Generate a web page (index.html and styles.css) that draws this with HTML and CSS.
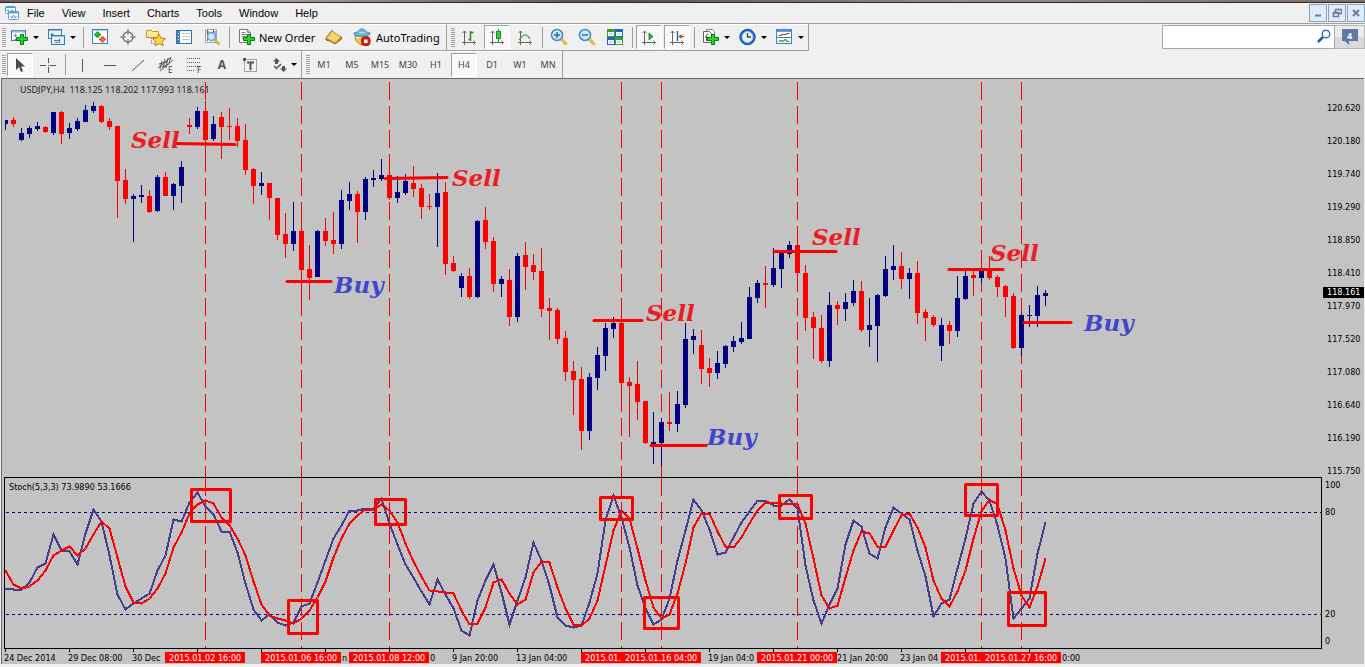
FILE: index.html
```
<!DOCTYPE html>
<html lang="en">
<head>
<meta charset="utf-8">
<title>USDJPY,H4</title>
<link rel="stylesheet" href="styles.css">
</head>
<body>
<div class="titlestrip"></div>
<header class="menubar">
  <svg class="app-icon" width="16" height="16" viewBox="0 0 16 16"><g fill="#fff" stroke="#5b9bd9"><rect x="1.5" y="1.5" width="10" height="7" rx="1"/><path d="M1 2.5h11M3 5.500h2M4 4.500v2M7 5.500h2" fill="none"/><rect x="4.500" y="6.500" width="10" height="8" rx="1"/><path d="M4 7.500h11" stroke-width="2"/><path d="M6.500 11l1.500 2 1.500-3 1.500 3 1.500-2" fill="none"/></g></svg>
  <nav class="menu">
    <button>File</button><button>View</button><button>Insert</button><button>Charts</button><button>Tools</button><button>Window</button><button>Help</button>
  </nav>
  <div class="winbuttons">
    <button aria-label="Minimize"><svg width="10" height="10" viewBox="0 0 10 10"><path d="M2 7.500h6" stroke="#6d7c92" stroke-width="2"/></svg></button>
    <button aria-label="Restore"><svg width="10" height="10" viewBox="0 0 10 10"><path d="M3.500 4V1.500h6v4H7M3 1.500h7M1.500 4.500h5v4h-5zM1 5h6" fill="none" stroke="#6d7c92" stroke-width="1.500"/></svg></button>
    <button aria-label="Close"><svg width="10" height="10" viewBox="0 0 10 10"><path d="M2 2l6 6M8 2L2 8" stroke="#6d7c92" stroke-width="2"/></svg></button>
  </div>
</header>

<div class="row">
  <div class="bar main-tools">
    <span class="grip"></span>
    <button class="drop" aria-label="New chart"><svg width="18" height="18" viewBox="0 0 18 18"><rect x=".5" y="2.500" width="14" height="10" fill="#fff" stroke="#3c78b4"/><path d="M1 3.500h13" stroke="#8db9e4" stroke-width="2"/><path d="M2.500 7.500h4M4.500 5.500v4M3 11.500h5" stroke="#7895b4"/><path d="M9.500 6.500h3v3h4v3h-4v4h-3v-4h-4v-3h4z" fill="#25d825" stroke="#087a12"/></svg><i></i></button>
    <button class="drop" aria-label="Profiles"><svg width="18" height="18" viewBox="0 0 18 18"><g fill="#e8f2fc" stroke="#3c78b4"><rect x=".5" y="1.500" width="13" height="9"/><path d="M1 2.500h12" stroke="#8db9e4"/><path d="M2.500 6.500h3M4 5v3" /><rect x="3.500" y="7.500" width="13" height="9"/><path d="M4 8.500h12" stroke="#8db9e4"/><path d="M6 12.500h6M11.500 11v4M7 14.500h3"/></g></svg><i></i></button>
    <span class="sep"></span>
    <button class="tool" aria-label="Market Watch"><svg width="16" height="16" viewBox="0 0 16 16"><rect x=".5" y=".5" width="15" height="14" fill="#fff" stroke="#3c82c8"/><path d="M1 1.500h14" stroke="#a9cdf0"/><path d="M5.500 2.500L9 6H7v2H4V6H2z" fill="#28c228" stroke="#097c12" stroke-width=".8"/><path d="M10.500 13.500L14 10h-2V8H9v2H7z" fill="#ff6a35" stroke="#c4310a" stroke-width=".8"/></svg></button>
    <button class="tool" aria-label="Data Window"><svg width="16" height="16" viewBox="0 0 16 16"><circle cx="8" cy="8" r="5" fill="none" stroke="#777" stroke-width="1.500"/><path d="M8 0v6M8 10v6M0 8h6M10 8h6" stroke="#666"/></svg></button>
    <button class="tool" aria-label="Favorites"><svg width="20" height="18" viewBox="0 0 20 18"><path d="M.5 2.500h5l1 1h6v6h-12z" fill="#ffe58a" stroke="#c29a26"/><path d="M1 5h11" stroke="#fff4bd"/><path d="M5.500 10v6M5.500 15.500h4" stroke="#777" stroke-dasharray="1 1"/><path d="M13 6l2 4 4.500.6-3.200 3 .8 4.200-4.100-2.100-4.100 2.100.8-4.200-3.200-3L11 10z" fill="#ffd34c" stroke="#ba861a"/></svg></button>
    <button class="tool" aria-label="Navigator"><svg width="16" height="16" viewBox="0 0 16 16"><rect x=".5" y="1.500" width="15" height="13" fill="#fff" stroke="#2c72ba"/><path d="M2.500 2v12" stroke="#3e7fc2" stroke-width="3"/><path d="M2 4.500h1M2 7.500h1M2 10.500h1" stroke="#fff"/><path d="M6 4.500h8M6 7.500h8M6 10.500h8" stroke="#b8c9e8"/></svg></button>
    <button class="tool" aria-label="Strategy Tester"><svg width="18" height="18" viewBox="0 0 18 18"><path d="M2.500 1.500h11v13h-11z" fill="#f9fafc" stroke="#9aa4b0"/><path d="M4.500 2v11M6.500 4h-3M10.500 2v7M12 3v4" stroke="#666"/><path d="M11.500 11.500l5 5" stroke="#e3b139" stroke-width="2.500"/><circle cx="8.500" cy="8.500" r="4" fill="#c5e6fb" fill-opacity=".85" stroke="#5b9bd1" stroke-width="1.400"/></svg></button>
    <span class="sep"></span>
    <button class="wide new-order"><svg width="17" height="18" viewBox="0 0 17 18"><path d="M1.500 1.500h8l3 3v10h-11z" fill="#fff" stroke="#777"/><path d="M9.500 1.500v3h3M3.500 4.500h4M3.500 6.500h7M3.500 8.500h7M3.500 10.500h4" fill="none" stroke="#888"/><path d="M9.500 6.500h3v3h4v3h-4v4h-3v-4h-4v-3h4z" fill="#25d825" stroke="#087a12"/></svg>New Order</button>
    <button class="tool" aria-label="MetaEditor"><svg width="18" height="16" viewBox="0 0 18 16"><path d="M1 9l6-7.500c3 3 6 5 9.500 6.500v2L10 15C7 13 4 11.500 1 11z" fill="#c98a1c" stroke="#8f5c0c"/><path d="M1.500 9L7.500 2c3 3 5.500 4.500 8.500 6l-6 5.500C7 12 4.500 10.500 1.500 9z" fill="#f7cf5c"/><path d="M5 8l4 2.500M7 5.500l5 3" stroke="#fbe6a4"/></svg></button>
    <button class="wide auto-trading"><svg width="18" height="18" viewBox="0 0 18 18"><path d="M2 8h13l-2 6-5 3-5-4z" fill="#f6cb51" stroke="#b88a1d"/><path d="M3 9.500h11" stroke="#fff0b2"/><path d="M1 6.500C0 4 4 4.500 5 4c1-4 7-4 8 0 1 .5 5 0 4 2-2 3-14 3-16 .5z" fill="#6fb7e4" stroke="#3e86b8"/><path d="M6 4c2 1 4 1 6 0" fill="none" stroke="#d2edfc"/><rect x="8.500" y="9" width="8.500" height="8.500" rx="3" fill="#e21c10" stroke="#a80d06"/><rect x="11" y="11.500" width="3.500" height="3.500" fill="#fff"/></svg>AutoTrading</button>
  </div>
  <div class="bar">
    <span class="grip"></span>
    <button class="tool" aria-label="Bar Chart"><svg width="16" height="16" viewBox="0 0 16 16"><path class="axes" d="M3.500 2v14M1.500 4l2-2 2 2M1 13.500h13M12.500 11.500l2 2-2 2"/><path d="M9.500 2v10M7.500 10.500h2M9.500 3.500h3" fill="none" stroke="#14911c" stroke-width="1.500"/></svg></button>
    <button class="tool pressed" aria-label="Candlesticks"><svg width="16" height="16" viewBox="0 0 16 16"><path class="axes" d="M3.500 2v14M1.500 4l2-2 2 2M1 13.500h13M12.500 11.500l2 2-2 2"/><path d="M9.500 0v13" stroke="#14911c"/><rect x="7.500" y="2.500" width="4" height="7" fill="#2bd13a" stroke="#14911c"/></svg></button>
    <button class="tool" aria-label="Line Chart"><svg width="16" height="16" viewBox="0 0 16 16"><path class="axes" d="M3.500 2v14M1.500 4l2-2 2 2M1 13.500h13M12.500 11.500l2 2-2 2"/><path d="M2 11c3-3 4-6 7-5 2 1 3 2 4 4" fill="none" stroke="#3fa548" stroke-width="1.300"/></svg></button>
    <span class="sep"></span>
    <button class="tool" aria-label="Zoom In"><svg width="18" height="18" viewBox="0 0 18 18"><path d="M11 11l5.500 5.500" stroke="#d9a62a" stroke-width="3"/><path d="M11 11l5 5" stroke="#fbe08c"/><circle cx="7" cy="7" r="5.500" fill="#cdeafb" stroke="#3f8ccb" stroke-width="1.500"/><path d="M4 7h6M7 4v6" stroke="#2a6ca8" stroke-width="1.500"/></svg></button>
    <button class="tool" aria-label="Zoom Out"><svg width="18" height="18" viewBox="0 0 18 18"><path d="M11 11l5.500 5.500" stroke="#d9a62a" stroke-width="3"/><path d="M11 11l5 5" stroke="#fbe08c"/><circle cx="7" cy="7" r="5.500" fill="#cdeafb" stroke="#3f8ccb" stroke-width="1.500"/><path d="M4 7h6" stroke="#2a6ca8" stroke-width="1.500"/></svg></button>
    <button class="tool" aria-label="Tile Windows"><svg width="16" height="16" viewBox="0 0 16 16"><path d="M0 0h8v8H0zM8 8h8v8H8z" fill="#38a51c"/><path d="M8 0h8v8H8zM0 8h8v8H0z" fill="#2462d2"/><path d="M1 3h6v4H1zM9 3h6v4H9zM1 11h6v4H1zM9 11h6v4H9z" fill="#f5faff"/><path d="M2 5h4M10 5h4M2 13h4M10 13h4" stroke="#9dc0e8"/></svg></button>
    <span class="sep"></span>
    <button class="tool pressed" aria-label="Auto Scroll"><svg width="16" height="16" viewBox="0 0 16 16"><path class="axes" d="M3.500 2v14M1.500 4l2-2 2 2M1 13.500h13M12.500 11.500l2 2-2 2"/><path d="M8 4l4 3.500L8 11z" fill="#24b52e" stroke="#14811a" stroke-width=".8"/></svg></button>
    <button class="tool pressed" aria-label="Chart Shift"><svg width="16" height="16" viewBox="0 0 16 16"><path class="axes" d="M3.500 2v14M1.500 4l2-2 2 2M1 13.500h13M12.500 11.500l2 2-2 2"/><path d="M8.500 2v10" stroke="#1c6ca8" stroke-width="1.500"/><path d="M10 7.500h5" stroke="#b6401a"/><path d="M9.500 7.500l3-2.500v5z" fill="#b6401a"/></svg></button>
    <span class="sep"></span>
    <button class="drop" aria-label="Indicators"><svg width="18" height="18" viewBox="0 0 18 18"><path d="M4.500 1.500h6l2 2v9h-8z" fill="#fff" stroke="#888"/><path d="M1.500 3.500h6l2 2v9h-8z" fill="#fff" stroke="#666"/><path d="M6.500 6c-2-.5-2 1-2 3v4M3 9h3" fill="none" stroke="#555"/><path d="M9.500 6.500h3v3h4v3h-4v4h-3v-4h-4v-3h4z" fill="#25d825" stroke="#087a12"/></svg><i></i></button>
    <button class="drop" aria-label="Periods"><svg width="18" height="18" viewBox="0 0 18 18"><circle cx="8.500" cy="9" r="7.700" fill="#1b6cc8" stroke="#124a91"/><circle cx="8.500" cy="9" r="5.500" fill="#e9f5ff" stroke="#89bdee"/><path d="M8.500 5v4h3.500" fill="none" stroke="#345" stroke-width="1.300"/></svg><i></i></button>
    <button class="drop" aria-label="Templates"><svg width="18" height="18" viewBox="0 0 18 18"><rect x=".5" y="1.500" width="15" height="14" fill="#fff" stroke="#3c82c8"/><path d="M1 3h14" stroke="#5a9bdc" stroke-width="2"/><path d="M1 9.500h14" stroke="#3c82c8"/><path d="M2.500 7.500h2l2-1h3l2-1h2" fill="none" stroke="#a33c1c" stroke-width="1.200"/><path d="M2.500 13.500l2-1 2 1 3-2 2 2h2" fill="none" stroke="#2d9a33" stroke-width="1.200"/></svg><i></i></button>
  </div>
  <div class="search">
    <input type="text" aria-label="Search">
    <svg class="search-icon" width="14" height="14" viewBox="0 0 14 14"><path d="M1 13l5-5" stroke="#2450b0" stroke-width="2.500"/><circle cx="9" cy="5" r="3.800" fill="#f2f8ff" stroke="#3b6fd0" stroke-width="1.400"/></svg>
    <button class="alerts" aria-label="4 notifications"><svg width="16" height="16" viewBox="0 0 16 16"><path d="M0 0h16v12H7v4l-4-4H0z" fill="#5a7ba8"/></svg><b>4</b></button>
  </div>
</div>

<div class="row">
  <div class="bar line-tools">
    <span class="grip"></span>
    <button class="tool pressed" aria-label="Cursor"><svg width="16" height="16" viewBox="0 0 16 16"><path d="M4 1v12l3-3 2 5 2-1-2-4.500h4z" fill="#4a4a4a"/></svg></button>
    <button class="tool" aria-label="Crosshair"><svg width="16" height="16" viewBox="0 0 16 16"><path class="ink" d="M8.500 1v5M8.500 10v6M0 8.500h6M10 8.500h6M8 8.500h1"/></svg></button>
    <span class="sep"></span>
    <button class="tool" aria-label="Vertical Line"><svg width="16" height="16" viewBox="0 0 16 16"><path class="ink" d="M8.500 2v13"/></svg></button>
    <button class="tool" aria-label="Horizontal Line"><svg width="16" height="16" viewBox="0 0 16 16"><path class="ink" d="M2 8.500h12"/></svg></button>
    <button class="tool" aria-label="Trendline"><svg width="16" height="16" viewBox="0 0 16 16"><path class="ink" d="M2 14L14 3"/></svg></button>
    <button class="tool" aria-label="Equidistant Channel"><svg width="18" height="18" viewBox="0 0 18 18"><path class="ink" d="M1 12L13 2M3 15L16 4M5 5l-2 8M8 3l-2 9M11 2l-2 10M14 1l-2 6M2 8l8-2M5 11l7-3"/><text x="11" y="17" class="glyph">E</text></svg></button>
    <button class="tool" aria-label="Fibonacci Retracement"><svg width="18" height="18" viewBox="0 0 18 18"><path class="ink" stroke-dasharray="1 1" d="M2 2.500h14M2 6.500h14M2 10.500h14M2 14.500h8"/><text x="12" y="17" class="glyph">F</text></svg></button>
    <button class="tool letter" aria-label="Text">A</button>
    <button class="tool" aria-label="Text Label"><svg width="16" height="16" viewBox="0 0 16 16"><rect x="2.500" y="2.500" width="12" height="12" fill="none" stroke="#555" stroke-dasharray="1 1"/><path d="M1 1h3v3H1z" fill="#555"/><path d="M5 5.500h7M8.500 5v8" stroke="#555" stroke-width="2"/></svg></button>
    <button class="drop shapes" aria-label="Arrows"><svg width="16" height="16" viewBox="0 0 16 16"><path d="M4.500 1L8 4.500H6V7H3V4.500H1zM11.500 15L8 11.500h2V9h3v2.500h2z" fill="#555"/><path d="M2 9l2.500 2.500L9 7" fill="none" stroke="#555" stroke-width="1.500"/></svg><i></i></button>
  </div>
  <div class="bar frames">
    <span class="grip"></span>
    <button class="tool">M1</button><button class="tool">M5</button><button class="tool">M15</button><button class="tool">M30</button><button class="tool">H1</button><button class="tool pressed">H4</button><button class="tool">D1</button><button class="tool">W1</button><button class="tool">MN</button>
  </div>
</div>

<main class="chart">
  <svg class="price" id="price" role="img" aria-label="USDJPY four-hour candles"></svg>
  <div class="price-axis">
    <span>120.620</span><span>120.180</span><span>119.740</span><span>119.290</span><span>118.850</span><span>118.410</span><span>117.970</span><span>117.520</span><span>117.080</span><span>116.640</span><span>116.190</span><span>115.750</span>
    <strong class="quote">118.161</strong>
  </div>
  <svg class="stoch" id="stoch" role="img" aria-label="Stochastic oscillator"></svg>
  <div class="stoch-axis"><div><span>100</span><span>80</span></div><div><span>20</span><span>0</span></div></div>
  <svg class="dates" id="dates" role="img" aria-label="Time axis"></svg>
</main>
<script src="chart.js"></script>
</body>
</html>
```
FILE: styles.css
```
* { box-sizing: border-box; }
body {
  margin: 0;
  min-height: 100vh;
  display: flex;
  flex-direction: column;
  background: #f0f0f0;
  color: #000;
  font-family: "Noto Sans", "Open Sans", sans-serif;
  font-size: 11px;
}
button {
  margin: 0;
  padding: 0;
  border: 0;
  background: none;
  color: inherit;
  font: inherit;
}
svg { display: block; flex: none; }

.titlestrip {
  height: 3px;
  background: linear-gradient(90deg, #6b5a58, #a79a98 20%, #5d4d4c 45%, #968987 70%, #7c6d6b);
  border-bottom: 1px solid #2e2727;
}
.menubar {
  display: flex;
  align-items: center;
  height: 21px;
  padding-left: 4px;
  border-bottom: 1px solid #a0a0a0;
}
.menu {
  display: flex;
  gap: 17px;
  flex: 1;
  padding-left: 7px;
  font-family: "Liberation Sans", Arial, sans-serif;
}
.winbuttons { display: flex; gap: 1px; }
.winbuttons button {
  display: grid;
  place-items: center;
  width: 18px;
  height: 18px;
  border: 1px solid #8ea2bd;
  background: #dfeafa;
}

.row { display: flex; height: 27px; }
.bar {
  display: flex;
  align-items: center;
  border: solid #a0a0a0;
  border-width: 0 1px 1px 0;
  box-shadow: inset 0 1px #fff;
}
.bar + .bar { padding-left: 2px; }
.main-tools { padding-right: 6px; }
.line-tools, .frames { border-bottom: 0; }
.frames { color: #444; font-size: 9px; }
.grip {
  width: 4px;
  height: 19px;
  margin-left: 2px;
  background: repeating-linear-gradient(#a0a0a0 0 1px, #f0f0f0 1px 2px);
}
.sep {
  width: 6px;
  height: 21px;
  background: linear-gradient(#a0a0a0, #a0a0a0) 3px 0 / 1px 100% no-repeat;
}
.tool {
  display: grid;
  place-items: center;
  width: 28px;
  height: 24px;
}
.pressed {
  width: 26px;
  margin: 0 1px;
  background: #f9f9f9;
  border: 1px solid;
  border-color: #a0a0a0 #fff #fff #a0a0a0;
}
.drop {
  display: flex;
  align-items: center;
  gap: 4px;
  width: 37px;
  padding-left: 5px;
}
.drop i {
  border: 3px solid transparent;
  border-top-color: #000;
  border-bottom: 0;
}
.shapes { padding-left: 8px; gap: 3px; }
.wide { display: flex; align-items: center; gap: 4px; padding-left: 6px; }
.new-order { width: 88px; }
.auto-trading { padding-left: 5px; gap: 5px; }
.letter { color: #555; font-weight: bold; font-size: 12px; }
.axes { fill: none; stroke: #666; stroke-width: 1; }
.ink { fill: none; stroke: #555; stroke-width: 1; }
.glyph { font-size: 8px; fill: #333; }

.search {
  position: relative;
  display: flex;
  width: 203px;
  height: 24px;
  margin: 1px 0 0 auto;
}
.search input {
  flex: 1;
  min-width: 0;
  padding: 0 24px 0 4px;
  border: 1px solid #a8a8a8;
  background: #fff;
}
.search-icon { position: absolute; right: 34px; top: 4px; }
.alerts {
  position: relative;
  display: grid;
  place-items: center;
  width: 30px;
  border: 1px solid #b5b5b5;
  border-left: 0;
  background: linear-gradient(#ececec 50%, #dadada 50%);
}
.alerts b { position: absolute; top: 4px; color: #fff; font-size: 9px; line-height: 12px; }

.chart {
  flex: 1;
  display: grid;
  grid-template-columns: 1fr 42px;
  grid-template-rows: 398px 172px minmax(15px, 1fr);
  margin: 0 1px 3px;
  padding-left: 2px;
  background: #c3c3c3;
  border: solid #6a6a6a;
  border-width: 1px 0 0 1px;
  font-family: "DejaVu Sans Condensed", "Noto Sans", sans-serif;
  font-size: 9px;
  line-height: 12px;
}
.price { width: 100%; height: 100%; border-left: 1px solid #c3c3c3; }
.price-axis {
  position: relative;
  display: flex;
  flex-direction: column;
  gap: 21px;
  padding: 23px 0 0 5px;
}
.quote {
  position: absolute;
  left: 1px;
  right: 0;
  top: 208px;
  padding-left: 4px;
  background: #000;
  color: #fff;
  font-weight: normal;
  line-height: 11px;
}
.stoch { width: 100%; height: 100%; border: 1px solid #000; }
.stoch-axis {
  display: flex;
  flex-direction: column;
  justify-content: space-between;
  padding: 2px 0 2px 3px;
}
.stoch-axis div { display: flex; flex-direction: column; gap: 15px; }
.dates { width: 100%; height: 15px; grid-column: 1 / -1; }

.crisp { shape-rendering: crispEdges; }
.up { fill: #000080; }
.down { fill: #f00; }
.marker { stroke: #f00; stroke-dasharray: 18 6; }
.level { stroke: #000080; stroke-dasharray: 3 3; }
.k, .d { fill: none; stroke: #483d8b; stroke-width: 2; }
.d { stroke: #f00; }
.signal, .focus { fill: none; stroke: #f00; stroke-width: 3; stroke-linecap: round; stroke-linejoin: round; }
.note { font: italic bold 23px "DejaVu Serif", serif; }
.sell { fill: #ed1c24; }
.buy { fill: #3f48cc; }
.heading { font-family: "Noto Sans", sans-serif; font-size: 9px; fill: #222; }
.tag { fill: #f00; }
.tag-text { fill: #fff; }
.tick { stroke: #000; }
```
FILE: chart.js
```
// Candles, one every 8px: colour, high, body top, body bottom, low
const candles = `u 120 120 124 130|d 117 120 124 127|u 128 133 140 141|u 126 128 134 138|u 122 126 129 131|d 126 127 132 133|u 112 112 133 135|d 111 112 134 144|u 123 128 133 139|u 118 121 129 131|u 105 110 122 122|u 102 106 111 113|d 105 106 122 123|d 118 121 127 130|d 126 126 181 218|d 169 180 199 204|u 194 196 199 242|u 185 195 197 203|d 190 196 212 213|u 175 177 211 212|d 172 177 196 196|u 183 184 196 210|u 161 167 186 203|d 118 125 127 134|u 107 111 127 129|d 101 111 140 154|u 116 124 139 141|d 112 117 127 159|d 108 126 127 140|d 118 126 141 147|d 124 140 170 175|d 168 169 186 204|u 172 183 186 195|d 183 183 198 220|d 198 198 235 240|d 213 234 244 258|u 202 231 244 251|d 219 231 270 298|d 245 269 278 300|u 230 231 277 277|d 218 231 241 246|d 212 240 244 254|u 190 200 244 249|u 182 194 201 210|d 191 194 212 243|u 177 179 212 220|u 170 178 180 187|u 159 175 179 181|d 170 175 198 200|u 176 192 198 203|u 174 181 193 195|d 166 183 189 197|d 184 188 207 219|d 194 206 207 210|u 173 193 207 247|d 182 192 264 275|d 256 263 271 272|u 273 276 288 297|d 268 276 297 299|u 220 221 297 298|d 207 220 242 249|d 237 241 284 292|u 276 279 284 297|d 269 280 317 326|u 253 256 317 322|d 242 255 267 290|d 254 265 272 280|d 248 271 309 317|d 298 308 311 340|d 308 310 339 344|d 331 338 372 381|d 361 371 380 415|d 367 379 431 450|u 373 377 431 440|u 347 355 378 390|u 323 328 356 371|u 317 323 329 338|d 298 323 383 394|d 377 382 386 437|d 361 384 402 420|d 401 401 443 444|u 412 442 445 464|u 418 422 443 466|d 392 422 424 431|u 391 404 424 432|u 323 339 405 408|u 329 336 340 354|d 330 345 369 384|d 358 368 373 387|u 351 363 373 379|u 345 346 364 368|u 336 341 347 352|u 322 338 342 344|u 287 297 339 339|u 280 283 298 303|d 266 283 285 308|u 248 268 285 287|u 252 252 269 288|u 241 245 254 258|d 243 245 273 280|d 265 273 318 331|d 312 317 328 359|d 315 328 361 363|u 292 305 361 367|d 301 305 309 325|u 293 302 309 321|u 280 291 303 306|d 281 291 330 332|u 298 325 330 347|u 294 295 326 362|u 256 269 296 297|u 245 266 270 280|d 252 266 279 289|u 268 273 279 299|d 261 273 313 324|d 309 312 318 341|d 315 317 325 327|u 318 325 346 361|d 321 325 331 344|u 276 298 331 337|u 270 276 299 300|d 270 275 278 296|u 268 270 278 283|d 256 270 278 280|d 275 277 287 297|d 285 286 297 317|d 293 296 348 349|u 313 315 348 356|u 305 315 316 327|u 286 295 316 327|u 290 293 296 306`;

const main = [588,589,589,582,567,563,534,550,551,564,533,509,521,555,594,609,603,598,593,570,555,519,521,502,492,506,514,531,531,552,583,609,620,614,622,625,622,606,603,582,560,538,525,510,510,508,508,498,523,544,564,577,591,604,579,594,608,630,635,600,580,564,592,624,600,577,542,560,585,617,625,627,625,602,573,520,495,517,547,585,608,624,619,598,560,530,499,510,529,554,552,537,522,511,500,500,505,505,499,508,565,600,623,604,588,544,520,526,553,558,527,507,513,519,550,576,616,603,599,568,538,503,491,500,525,558,618,608,598,553,522];
const signal = [570,584,588,586,580,570,555,550,546,555,548,534,521,528,557,586,602,603,598,588,573,547,532,513,504,500,503,517,525,538,555,581,604,615,618,620,623,618,610,597,581,557,538,523,515,509,509,504,510,522,543,561,576,590,591,592,593,610,624,623,607,582,579,593,604,599,572,561,562,587,608,624,625,618,600,565,530,510,518,548,580,607,618,614,593,563,527,513,513,531,546,547,537,523,510,502,502,503,503,504,523,558,595,608,605,577,550,531,533,546,546,530,515,513,527,547,580,598,606,591,570,538,511,499,504,530,568,595,607,586,558];

const markers = [205, 301, 389, 621, 661, 797, 981, 1021];
const lines = [[174,143,235,144],[286,281,331,281],[384,178,447,177],[593,320,642,320],[650,445,706,445],[773,251,836,251],[948,269,1003,269],[1023,322,1071,322]];
const notes = [["Sell",131,148],["Sell",452,186],["Buy",334,293],["Sell",646,321],["Buy",707,445],["Sell",812,245],["Sell",990,261],["Buy",1084,331]];
const boxes = [[192,490,39,32],[289,601,29,33],[376,500,30,25],[601,498,32,22],[645,598,34,31],[780,496,32,23],[966,485,32,31],[1009,593,37,33]];
const labels = [["24 Dec 2014",4],["29 Dec 08:00",68],["30 Dec",132],["n",342],["0",430],["9 Jan 20:00",452],["13 Jan 04:00",516],["19 Jan 04:0",708],["21 Jan 20:00",837],["23 Jan 04",900],["0:00",1062]];
const tags = [["2015.01.02 16:00",165],["2015.01.06 16:00",261],["2015.01.08 12:00",349],["2015.01.",581],["2015.01.16 04:00",621],["2015.01.21 00:00",757],["2015.01.",941],["2015.01.27 16:00",981]];

const at = i => 5 + i * 8;
const vertical = (x, y1, y2) => `<line class="marker crisp" x1="${x + .5}" x2="${x + .5}" y1="${y1}" y2="${y2}"/>`;
const path = values => values.map((y, i) => `${at(i) + .5},${y + .5}`).join(" ");

const bodies = candles.split("|").map((row, i) => {
  const [kind, high, top, bottom, low] = row.split(" ");
  const cls = kind === "u" ? "up" : "down";
  return `<rect class="${cls}" x="${at(i)}" y="${high}" width="1" height="${low - high}"/>` +
         `<rect class="${cls}" x="${at(i) - 2}" y="${top}" width="5" height="${bottom - top}"/>`;
}).join("");

document.getElementById("price").innerHTML = `<g transform="translate(-5 -79)">
  ${markers.map(x => vertical(x, 82, 477)).join("")}
  <g class="crisp">${bodies}</g>
  <text class="heading" x="20" y="93" xml:space="preserve">USDJPY,H4  118.125 118.202 117.993 118.161</text>
  ${lines.map(([a, b, c, d]) => `<line class="signal" x1="${a + 1}" y1="${b + .5}" x2="${c}" y2="${d + .5}"/>`).join("")}
  ${notes.map(([t, x, y]) => `<text class="note ${t.toLowerCase()}" x="${x}" y="${y}">${t}</text>`).join("")}
</g>`;

document.getElementById("stoch").innerHTML = `<g transform="translate(-5 -478)">
  <path class="level crisp" d="M6 512.5H3000M6 614.5H3000"/>
  ${markers.map(x => vertical(x, 478, 648)).join("")}
  <polyline class="k crisp" points="${path(main)}"/>
  <polyline class="d crisp" points="${path(signal)}"/>
  ${boxes.map(([x, y, w, h]) => `<rect class="focus" x="${x - .5}" y="${y - .5}" width="${w}" height="${h}"/>`).join("")}
  <text x="9" y="490">Stoch(5,3,3) 73.9890 53.1666</text>
</g>`;

const ticks = Array.from({ length: 17 }, (_, i) => `M${at(i * 8) + .5} 649v3`).join("");
document.getElementById("dates").innerHTML = `<g transform="translate(-4 -649)">
  <path class="tick crisp" d="${ticks}"/>
  ${labels.map(([t, x]) => `<text x="${x}" y="661">${t}</text>`).join("")}
  ${tags.map(([t, x]) => `<rect class="tag" x="${x}" y="652" width="80" height="11"/><text class="tag-text" x="${x + 4}" y="661">${t}</text>`).join("")}
</g>`;
```
